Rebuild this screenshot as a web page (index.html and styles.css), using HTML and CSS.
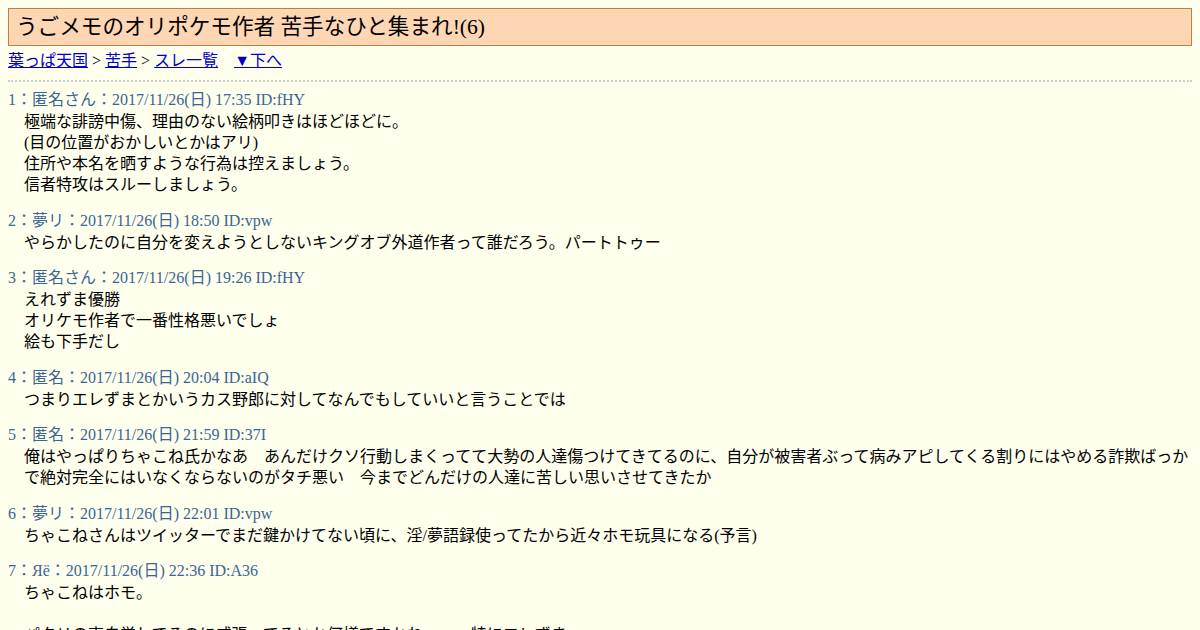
FILE: index.html
```html
<!DOCTYPE html>
<html lang="ja">
<head>
  <meta charset="UTF-8">
  <title>うごメモのオリポケモ作者 苦手なひと集まれ!(6)</title>
  <link rel="stylesheet" href="styles.css">
</head>
<body>
  <h1 class="thread-title">うごメモのオリポケモ作者 苦手なひと集まれ!(6)</h1>
  <div class="nav">
    <a href="#">葉っぱ天国</a> &gt; <a href="#">苦手</a> &gt; <a href="#">スレ一覧</a>　<a href="#bottom">▼下へ</a>
  </div>
  <hr class="sep">

  <dl class="thread">
    <dt>1：匿名さん：2017/11/26(日) 17:35 ID:fHY</dt>
    <dd>極端な誹謗中傷、理由のない絵柄叩きはほどほどに。<br>(目の位置がおかしいとかはアリ)<br>住所や本名を晒すような行為は控えましょう。<br>信者特攻はスルーしましょう。</dd>

    <dt>2：夢リ：2017/11/26(日) 18:50 ID:vpw</dt>
    <dd>やらかしたのに自分を変えようとしないキングオブ外道作者って誰だろう。パートトゥー</dd>

    <dt>3：匿名さん：2017/11/26(日) 19:26 ID:fHY</dt>
    <dd>えれずま優勝<br>オリケモ作者で一番性格悪いでしょ<br>絵も下手だし</dd>

    <dt>4：匿名：2017/11/26(日) 20:04 ID:aIQ</dt>
    <dd>つまりエレずまとかいうカス野郎に対してなんでもしていいと言うことでは</dd>

    <dt>5：匿名：2017/11/26(日) 21:59 ID:37I</dt>
    <dd>俺はやっぱりちゃこね氏かなあ　あんだけクソ行動しまくってて大勢の人達傷つけてきてるのに、自分が被害者ぶって病みアピしてくる割りにはやめる詐欺ばっかで絶対完全にはいなくならないのがタチ悪い　今までどんだけの人達に苦しい思いさせてきたか</dd>

    <dt>6：夢リ：2017/11/26(日) 22:01 ID:vpw</dt>
    <dd>ちゃこねさんはツイッターでまだ鍵かけてない頃に、淫/夢語録使ってたから近々ホモ玩具になる(予言)</dd>

    <dt>7：Яё：2017/11/26(日) 22:36 ID:A36</dt>
    <dd>ちゃこねはホモ。<br><br>パクリの事自覚してるのに威張ってるとか何様ですかね　　　特にエレずま</dd>
  </dl>
  <a id="bottom"></a>
</body>
</html>
```

FILE: styles.css
```css
body {
  margin: 8px;
  background: #ffffee;
  color: #000;
  font-family: "Liberation Serif", "Noto Sans CJK JP", serif;
  font-size: 16px;
}

.thread-title {
  margin: 0;
  padding: 0 7px;
  font-size: 21.6px;
  font-weight: normal;
  line-height: 36px;
  background: #ffd6b4;
  border: 1px solid #c0803c;
}

.nav {
  margin-top: 4px;
  line-height: 21px;
}

.nav a {
  color: #0000cc;
}

.sep {
  margin: 9px 0 0;
  height: 0;
  border: none;
  border-top: 2px dotted #cfcfcf;
}

.thread {
  margin: 7px 0 0;
}

.thread dt {
  color: #3a6595;
  line-height: 22px;
}

.thread dd {
  margin: 0 0 14.5px 16px;
  line-height: 21px;
}
```
